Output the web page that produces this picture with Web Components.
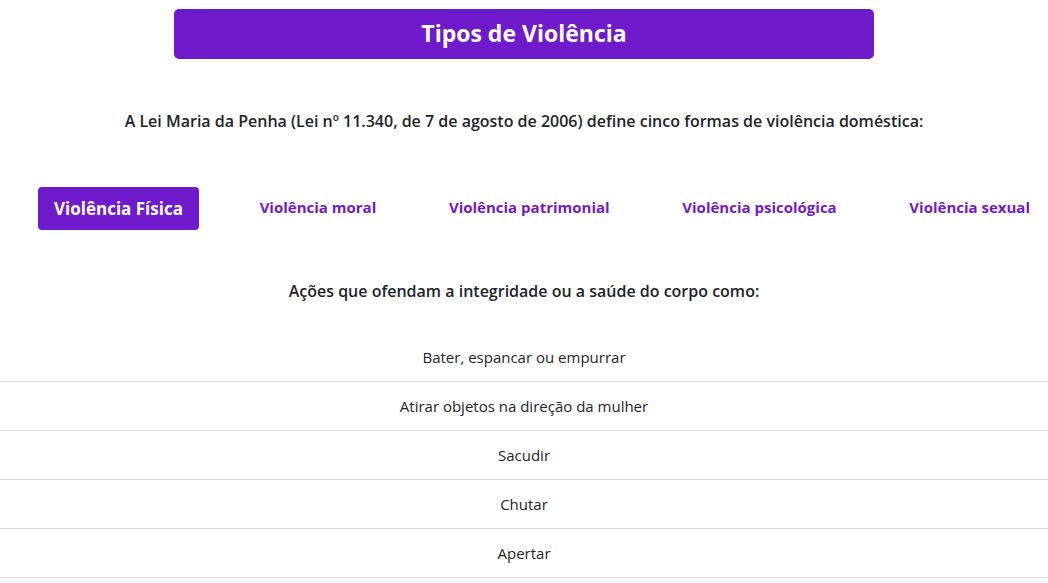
<!DOCTYPE html>
<html lang="pt-BR">
<head>
<meta charset="utf-8">
<title>Tipos de Violência</title>
<style>
body { margin: 0; background: #fff; color: #212529; font: 16px/24px "Segoe UI", "Open Sans", "Noto Sans", sans-serif; }
</style>
</head>
<body>
<violence-page></violence-page>
<script>
const define = (name, html, ready) => customElements.define(name, class extends HTMLElement {
  constructor() {
    super();
    this.attachShadow({ mode: 'open' }).innerHTML = html;
  }
  connectedCallback() { if (ready) ready(this); }
});

define('page-banner', `
<style>
:host { display: block; box-sizing: border-box; width: calc(100% - 32px); max-width: 700px; margin: 0 auto; padding: 9px 16px 11px; border-radius: 5px; background: #6f1acb; color: #fff; text-align: center; }
h1 { margin: 0; font-size: 23px; line-height: 30px; font-weight: 700; }
</style>
<h1><slot></slot></h1>`);

define('lead-text', `
<style>
:host { display: block; text-align: center; }
p { margin: 0; font-size: 16px; line-height: 24px; font-weight: 600; }
</style>
<p><slot></slot></p>`);

define('type-tab', `
<style>
:host { display: block; }
:host([selected]) { margin-right: 4px; }
button { font: inherit; font-size: 15px; line-height: 24px; font-weight: 700; color: #6f1acb; background: none; border: 0; border-radius: 4px; padding: 8px 16px; white-space: nowrap; cursor: pointer; }
:host([selected]) button { color: #fff; background: #6f1acb; font-size: 17px; line-height: 27px; }
</style>
<button type="button"><slot></slot></button>`,
el => el.shadowRoot.querySelector('button').setAttribute('aria-pressed', el.hasAttribute('selected')));

define('type-tabs', `
<style>
:host { display: block; }
nav { display: flex; align-items: flex-start; justify-content: space-between; padding: 0 2px 0 38px; }
</style>
<nav aria-label="Formas de violência"><slot></slot></nav>`);

define('action-list', `
<style>
:host { display: block; }
ul { list-style: none; margin: 0; padding: 0; }
</style>
<ul role="list"><slot></slot></ul>`);

define('action-item', `
<style>
:host { display: block; padding: 12px 16px; border-bottom: 1px solid #dfdfdf; text-align: center; font-size: 15px; line-height: 24px; }
</style>
<slot></slot>`, el => el.setAttribute('role', 'listitem'));

define('violence-page', `
<style>
:host { display: block; padding-top: 9px; }
lead-text { margin-top: 50px; }
type-tabs { margin-top: 54px; }
lead-text.actions { margin: 49px 0 30px; }
</style>
<main>
<page-banner>Tipos de Violência</page-banner>
<lead-text>A Lei Maria da Penha (Lei nº 11.340, de 7 de agosto de 2006) define cinco formas de violência doméstica:</lead-text>
<type-tabs>
<type-tab selected>Violência Física</type-tab>
<type-tab>Violência moral</type-tab>
<type-tab>Violência patrimonial</type-tab>
<type-tab>Violência psicológica</type-tab>
<type-tab>Violência sexual</type-tab>
</type-tabs>
<lead-text class="actions">Ações que ofendam a integridade ou a saúde do corpo como:</lead-text>
<action-list>
<action-item>Bater, espancar ou empurrar</action-item>
<action-item>Atirar objetos na direção da mulher</action-item>
<action-item>Sacudir</action-item>
<action-item>Chutar</action-item>
<action-item>Apertar</action-item>
</action-list>
</main>`);
</script>
</body>
</html>
